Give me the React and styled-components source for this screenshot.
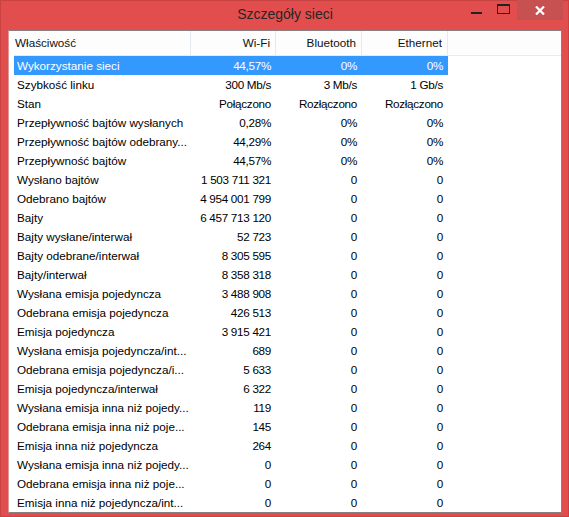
import styled, { createGlobalStyle } from "styled-components";

const GlobalStyle = createGlobalStyle`
  html, body { margin: 0; padding: 0; background: #ffffff; }
  body { font-family: "Liberation Sans", Arial, sans-serif; }
`;

const cols = "177px 85px 86px 86px";

const Window = styled.div`
  width: 569px;
  height: 517px;
  box-sizing: border-box;
  background: #e24e4e;
  border: 1px solid #c94343;
  display: flex;
  flex-direction: column;
  padding: 0 6px 3px 7px;
`;

const TitleBar = styled.div`
  height: 29px;
  display: flex;
  align-items: flex-start;
  flex-shrink: 0;
`;

const Title = styled.div`
  flex: 1;
  text-align: center;
  font-family: "Liberation Sans", Arial, sans-serif;
  font-size: 14px;
  color: #262626;
  line-height: 27px;
  padding-left: 99px;
`;

const Controls = styled.div`
  display: flex;
  align-items: flex-start;
  margin-right: -1px;
  margin-top: -1px;
`;

const CtrlButton = styled.div`
  width: ${(p) => p.w}px;
  height: 20px;
  display: flex;
  align-items: center;
  justify-content: center;
  background: ${(p) => (p.close ? "#c75050" : "transparent")};
`;

const Client = styled.div`
  flex: 1;
  background: #ffffff;
  border: 1px solid #8a7f80;
  border-left-color: #d99a9a;
  padding-left: 5px;
  overflow: hidden;
`;

const Header = styled.div`
  display: grid;
  grid-template-columns: ${cols} 1fr;
  height: 24px;
  border-bottom: 1px solid #e3ebf5;
  background: #fdfdfe;
`;

const HeadCell = styled.div`
  font-size: 11.7px;
  color: #111;
  line-height: 24px;
  padding: 0 5px 0 1px;
  text-align: ${(p) => (p.left ? "left" : "right")};
  border-right: ${(p) => (p.last ? "none" : "1px solid #e5eaf1")};
  white-space: nowrap;
`;

const Row = styled.div`
  display: grid;
  grid-template-columns: ${cols};
  width: 434px;
  height: 19px;
  background: ${(p) => (p.selected ? "#3399ff" : "transparent")};
  color: ${(p) => (p.selected ? "#ffffff" : "#000000")};
`;

const Cell = styled.div`
  font-size: 11.7px;
  line-height: 19px;
  padding: ${(p) => (p.left ? "0 0 0 3px" : "0 5px 0 0")};
  text-align: ${(p) => (p.left ? "left" : "right")};
  letter-spacing: ${(p) => (p.left ? "0" : "-0.3px")};
  white-space: nowrap;
`;

const rows = [
  ["Wykorzystanie sieci", "44,57%", "0%", "0%"],
  ["Szybkość linku", "300 Mb/s", "3 Mb/s", "1 Gb/s"],
  ["Stan", "Połączono", "Rozłączono", "Rozłączono"],
  ["Przepływność bajtów wysłanych", "0,28%", "0%", "0%"],
  ["Przepływność bajtów odebrany...", "44,29%", "0%", "0%"],
  ["Przepływność bajtów", "44,57%", "0%", "0%"],
  ["Wysłano bajtów", "1 503 711 321", "0", "0"],
  ["Odebrano bajtów", "4 954 001 799", "0", "0"],
  ["Bajty", "6 457 713 120", "0", "0"],
  ["Bajty wysłane/interwał", "52 723", "0", "0"],
  ["Bajty odebrane/interwał", "8 305 595", "0", "0"],
  ["Bajty/interwał", "8 358 318", "0", "0"],
  ["Wysłana emisja pojedyncza", "3 488 908", "0", "0"],
  ["Odebrana emisja pojedyncza", "426 513", "0", "0"],
  ["Emisja pojedyncza", "3 915 421", "0", "0"],
  ["Wysłana emisja pojedyncza/int...", "689", "0", "0"],
  ["Odebrana emisja pojedyncza/i...", "5 633", "0", "0"],
  ["Emisja pojedyncza/interwał", "6 322", "0", "0"],
  ["Wysłana emisja inna niż pojedy...", "119", "0", "0"],
  ["Odebrana emisja inna niż poje...", "145", "0", "0"],
  ["Emisja inna niż pojedyncza", "264", "0", "0"],
  ["Wysłana emisja inna niż pojedy...", "0", "0", "0"],
  ["Odebrana emisja inna niż poje...", "0", "0", "0"],
  ["Emisja inna niż pojedyncza/int...", "0", "0", "0"],
];

const App = () => {
  return (
    <Window>
      <GlobalStyle />
      <TitleBar>
        <Title>Szczegóły sieci</Title>
        <Controls>
          <CtrlButton w={27}>
            <svg width="11" height="20" viewBox="0 0 11 20">
              <rect x="0" y="12" width="11" height="2" fill="#222" />
            </svg>
          </CtrlButton>
          <CtrlButton w={27}>
            <svg width="13" height="20" viewBox="0 0 13 20">
              <rect x="0.5" y="4.5" width="12" height="9" fill="none" stroke="#222" />
              <rect x="0" y="4" width="13" height="2" fill="#222" />
            </svg>
          </CtrlButton>
          <CtrlButton w={46} close>
            <svg width="10" height="9" viewBox="0 0 10 9">
              <path d="M1 0.5 L9 8.5 M9 0.5 L1 8.5" stroke="#fff" strokeWidth="2.2" />
            </svg>
          </CtrlButton>
        </Controls>
      </TitleBar>
      <Client>
        <Header>
          <HeadCell left>Właściwość</HeadCell>
          <HeadCell>Wi-Fi</HeadCell>
          <HeadCell>Bluetooth</HeadCell>
          <HeadCell>Ethernet</HeadCell>
          <HeadCell last />
        </Header>
        {rows.map((r, i) => (
          <Row key={i} selected={i === 0}>
            <Cell left>{r[0]}</Cell>
            <Cell>{r[1]}</Cell>
            <Cell>{r[2]}</Cell>
            <Cell>{r[3]}</Cell>
          </Row>
        ))}
      </Client>
    </Window>
  );
};

export default App;
